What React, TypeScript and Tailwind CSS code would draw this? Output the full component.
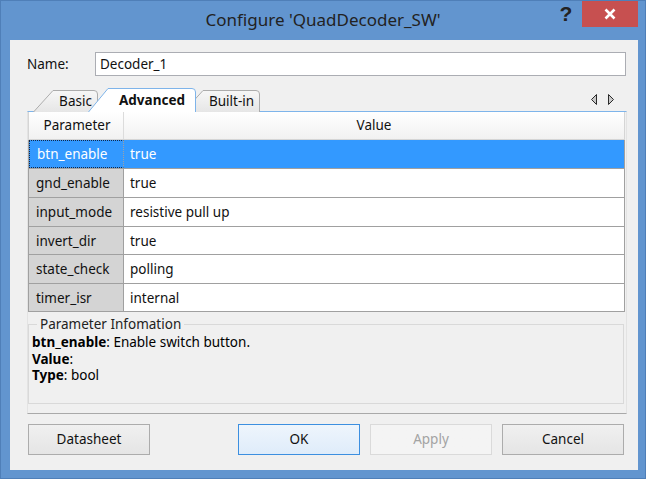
import React from "react";

type Row = { name: string; value: string; h: string };

const rows: Row[] = [
  { name: "btn_enable", value: "true", h: "h-[29px]" },
  { name: "gnd_enable", value: "true", h: "h-[29px]" },
  { name: "input_mode", value: "resistive pull up", h: "h-[29px]" },
  { name: "invert_dir", value: "true", h: "h-[28px]" },
  { name: "state_check", value: "polling", h: "h-[29px]" },
  { name: "timer_isr", value: "internal", h: "h-[28px]" },
];

// tab outline with the slanted left edge
const TabShape = ({ w, h, active, id }: { w: number; h: number; active: boolean; id: string }) => (
  <svg width={w} height={h} className="absolute inset-0">
    <defs>
      <linearGradient id={id} x1="0" y1="0" x2="0" y2="1">
        <stop offset="0" stopColor={active ? "#ffffff" : "#f7f7f7"} />
        <stop offset="1" stopColor={active ? "#ffffff" : "#e6e6e6"} />
      </linearGradient>
    </defs>
    <path
      d={`M0.5,${h} L20,0.5 L${w - 4},0.5 Q${w - 0.5},0.5 ${w - 0.5},4 L${w - 0.5},${h}`}
      fill={`url(#${id})`}
      stroke={active ? "#7eb4ea" : "#acacac"}
      strokeWidth="1"
    />
  </svg>
);

const Tab = ({
  label,
  w,
  active,
  className,
}: {
  label: string;
  w: number;
  active?: boolean;
  className: string;
}) => {
  const h = active ? 24 : 22;
  return (
    <div className={`relative ${className}`}>
      <TabShape w={w} h={h} active={!!active} id={`tab-${label}`} />
      <div
        className={`relative flex h-full items-center justify-center pl-[20px] pt-[1px] ${active ? "font-bold" : ""}`}
      >
        {label}
      </div>
    </div>
  );
};

const Button = ({ label, className }: { label: string; className: string }) => (
  <div
    className={`flex h-[31px] w-[122px] items-center justify-center border bg-gradient-to-b ${className}`}
  >
    {label}
  </div>
);

export default function App() {
  return (
    <div className="h-[479px] w-[646px] border border-[#4f7fb8] bg-[#6295cf] font-['Noto_Sans','Open_Sans',sans-serif] text-[13.5px] text-[#111]">
      {/* title bar */}
      <div className="relative flex h-[39px] items-center justify-center pb-[1px]">
        <span className="text-[17px] text-[#222]">Configure 'QuadDecoder_SW'</span>
        <div className="absolute right-[69px] top-[1px] flex h-[24px] w-[20px] items-center justify-center font-['Liberation_Sans',sans-serif] text-[21px] font-bold text-[#222]">
          ?
        </div>
        <div className="absolute right-[7px] top-0 flex h-[26px] w-[56px] items-center justify-center bg-[#c75050]">
          <svg width="12" height="12" viewBox="0 0 12 12">
            <path d="M1.5 1.5 L10.5 10.5 M10.5 1.5 L1.5 10.5" stroke="#fff" strokeWidth="2.6" />
          </svg>
        </div>
      </div>

      {/* client area */}
      <div className="ml-[9px] flex h-[430px] w-[628px] flex-col bg-[#f0f0f0]">
        <div className="mt-[12px] flex h-[24px] items-center pl-[17px]">
          <span className="w-[68px]">Name:</span>
          <div className="flex h-[24px] w-[531px] items-center border border-[#abadb3] bg-white pl-[4px]">
            Decoder_1
          </div>
        </div>

        {/* tabs */}
        <div className="relative z-10 -mb-px mt-[12px] flex h-[24px] items-end pl-[23px] pr-[24px]">
          <Tab label="Basic" w={65} className="z-0 h-[22px] w-[65px]" />
          <Tab label="Advanced" w={108} active className="z-20 -ml-[10px] h-[24px] w-[108px]" />
          <Tab label="Built-in" w={77} className="z-10 -ml-[13px] h-[22px] w-[77px]" />
          <div className="flex-1" />
          <div className="mb-[7px] flex items-center gap-[11px]">
            <svg width="6" height="11" viewBox="0 0 6 11">
              <polygon points="5.5,0.5 0.5,5.5 5.5,10.5" fill="#c8c8c8" stroke="#2a2a2a" />
            </svg>
            <svg width="6" height="11" viewBox="0 0 6 11">
              <polygon points="0.5,0.5 5.5,5.5 0.5,10.5" fill="#c8c8c8" stroke="#2a2a2a" />
            </svg>
          </div>
        </div>

        {/* pane */}
        <div className="ml-[17px] flex w-[600px] flex-col border-x border-b border-t border-x-[#e3e3e3] border-b-[#a9a9a9] border-t-[#7eb4ea] pb-[9px]">
          <div className="w-[597px]">
            <div className="flex h-[28px] border-b border-l border-r border-[#d5d5d5] bg-gradient-to-b from-white to-[#f1f1f1]">
              <div className="flex w-[95px] items-center justify-center border-r border-[#dcdcdc] pl-[2px]">
                Parameter
              </div>
              <div className="flex flex-1 items-center justify-center">Value</div>
            </div>
            {rows.map((r, i) => {
              const sel = i === 0;
              return (
                <div
                  key={r.name}
                  className={`flex border-b border-l border-r border-[#a0a0a0] ${r.h} ${sel ? "bg-[#3399ff] text-white" : "bg-white"}`}
                >
                  <div
                    className={`flex w-[95px] items-center border-r border-r-[#a0a0a0] pl-[7px] pt-[1px] ${sel ? "border border-dotted border-[#10284a]" : "bg-[#d4d4d4]"}`}
                  >
                    {r.name}
                  </div>
                  <div className="flex flex-1 items-center pl-[6px] pt-[1px]">{r.value}</div>
                </div>
              );
            })}
          </div>

          <fieldset className="mt-[4px] h-[88px] w-[596px] border border-[#d9d9d9] pl-[3px]">
            <legend className="ml-[5px] px-[3px] leading-[17px] text-[#222]">Parameter Infomation</legend>
            <div className="pt-[1px] leading-[16.5px] text-black">
              <div>
                <b>btn_enable</b>: Enable switch button.
              </div>
              <div>
                <b>Value</b>:
              </div>
              <div>
                <b>Type</b>: bool
              </div>
            </div>
          </fieldset>
        </div>

        {/* buttons */}
        <div className="mt-[10px] flex pl-[18px]">
          <Button label="Datasheet" className="border-[#acacac] from-[#f0f0f0] to-[#e5e5e5]" />
          <div className="w-[88px]" />
          <Button label="OK" className="border-[#3c8fe0] from-[#eef5fc] to-[#dfecfa]" />
          <div className="w-[10px]" />
          <Button label="Apply" className="border-[#dadada] from-[#f4f4f4] to-[#f4f4f4] text-[#a3a3a3]" />
          <div className="w-[10px]" />
          <Button label="Cancel" className="border-[#acacac] from-[#f0f0f0] to-[#e5e5e5]" />
        </div>
      </div>
    </div>
  );
}
